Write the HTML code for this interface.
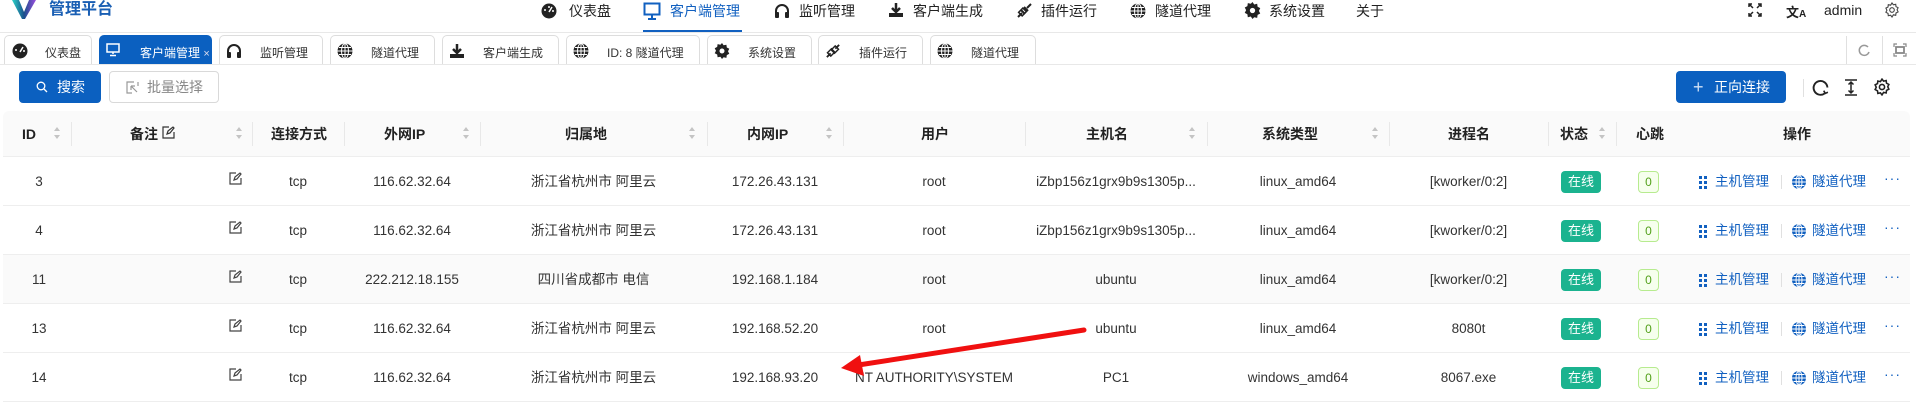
<!DOCTYPE html>
<html><head><meta charset="utf-8"><style>
*{margin:0;padding:0;box-sizing:border-box}
body{width:1916px;height:417px;overflow:hidden;background:#fff;font-family:"Liberation Sans","Noto Sans CJK SC",sans-serif;color:#222;position:relative}
.a{position:absolute;white-space:nowrap}
.nav{font-size:14px;top:2px;line-height:18px;color:#222}
.tab{position:absolute;top:35px;height:30px;border:1px solid #ddd;border-bottom:none;border-radius:5px 5px 0 0;font-size:12px;color:#333;background:#fff}
.tab svg{position:absolute;left:6px;top:7px}
.tab span{position:absolute;left:40px;top:8px}
.th{position:absolute;top:111px;height:46px;line-height:46px;font-size:14px;font-weight:bold;text-align:center;color:#222}
.sep{position:absolute;top:122px;width:1px;height:24px;background:#e8e8e8}
.sort{position:absolute;top:126px;width:8px;height:14px}
.row{position:absolute;left:3px;width:1907px;height:49px;border-bottom:1px solid #eee}
.c{position:absolute;font-size:13.5px;line-height:16px;text-align:center;color:#333}
.badge{position:absolute;width:40px;height:22px;background:#1bb38f;color:#fff;border-radius:4px;font-size:13px;line-height:22px;text-align:center}
.hb{position:absolute;width:21px;height:22px;background:#f6ffed;border:1px solid #b7eb8f;color:#52a01a;border-radius:4px;font-size:12px;line-height:20px;text-align:center}
.lk{position:absolute;color:#1160c0;font-size:13.5px;line-height:16px}
</style></head><body>
<!-- top nav -->
<svg class="a" style="left:10px;top:0" width="28" height="20"><defs><linearGradient id="g" x1="0" y1="0" x2="1" y2="0"><stop offset="0" stop-color="#2ad4c8"/><stop offset=".5" stop-color="#1a4f8a"/><stop offset="1" stop-color="#9b4de0"/></linearGradient></defs><polygon points="2,0 9,0 14,12 19,0 26,0 15,19 12,19" fill="url(#g)"/></svg>
<div class="a" style="left:49px;top:0;font-size:16px;font-weight:bold;color:#1a5fb4;line-height:19px">管理平台</div>
<svg class="a" style="left:541px;top:3px" width="16" height="16" viewBox="0 0 16 16"><circle cx="8" cy="8" r="7.5" fill="#222"/><path d="M8 9 L11 4" stroke="#fff" stroke-width="1.5"/><circle cx="4" cy="7" r="1" fill="#fff"/><circle cx="8" cy="4" r="1" fill="#fff"/><circle cx="12" cy="8" r="1" fill="#fff"/></svg>
<div class="a nav" style="left:569px">仪表盘</div>
<svg class="a" style="left:643px;top:2px" width="18" height="18" viewBox="0 0 18 18"><rect x="1.5" y="1.5" width="15" height="11" fill="none" stroke="#1160c0" stroke-width="2"/><path d="M9 13v3M5 17h8" stroke="#1160c0" stroke-width="2"/></svg>
<div class="a nav" style="left:670px;color:#1160c0">客户端管理</div>
<div class="a" style="left:643px;top:30px;width:99px;height:2px;background:#1160c0"></div>
<svg class="a" style="left:774px;top:3px" width="16" height="16" viewBox="0 0 16 16"><path d="M2 12V8a6 6 0 0 1 12 0v4" fill="none" stroke="#222" stroke-width="2"/><rect x="1" y="9" width="4" height="6" rx="1" fill="#222"/><rect x="11" y="9" width="4" height="6" rx="1" fill="#222"/></svg>
<div class="a nav" style="left:799px">监听管理</div>
<svg class="a" style="left:888px;top:2px" width="16" height="16" viewBox="0 0 16 16"><path d="M8 1v9M4 6l4 4 4-4" stroke="#222" stroke-width="2.5" fill="none"/><rect x="1" y="11" width="14" height="4" fill="#222"/></svg>
<div class="a nav" style="left:913px">客户端生成</div>
<svg class="a" style="left:1016px;top:2px" width="17" height="17" viewBox="0 0 17 17"><path d="M2 15l4-4M15 2l-4 4M5 8l4 4M8 5l4 4" stroke="#222" stroke-width="2" fill="none"/><rect x="4" y="7" width="5" height="6" transform="rotate(45 6.5 10)" fill="none" stroke="#222" stroke-width="1.5"/></svg>
<div class="a nav" style="left:1041px">插件运行</div>
<svg class="a" style="left:1130px;top:3px" width="16" height="16" viewBox="0 0 16 16"><circle cx="8" cy="8" r="7.5" fill="#222"/><path d="M0.5 8h15M8 .5v15M2 4.5h12M2 11.5h12" stroke="#fff" stroke-width="1"/><ellipse cx="8" cy="8" rx="3.5" ry="7.5" fill="none" stroke="#fff"/></svg>
<div class="a nav" style="left:1155px">隧道代理</div>
<svg class="a" style="left:1244px;top:2px" width="17" height="17" viewBox="0 0 16 16"><path d="M8 0l1.6 2.3 2.8-.6.4 2.8 2.5 1.3-1.3 2.5 1.3 2.5-2.5 1.3-.4 2.8-2.8-.6L8 16l-1.6-2.3-2.8.6-.4-2.8L.7 10.2 2 7.7.7 5.2l2.5-1.3.4-2.8 2.8.6z" fill="#222"/><circle cx="8" cy="8" r="2.5" fill="#fff"/></svg>
<div class="a nav" style="left:1269px">系统设置</div>
<div class="a nav" style="left:1356px">关于</div>
<svg class="a" style="left:1748px;top:3px" width="14" height="14" viewBox="0 0 14 14" stroke="#222" stroke-width="1.5" fill="none"><path d="M1 4V1h3M10 1h3v3M13 10v3h-3M4 13H1v-3M1 1l4 4M13 1l-4 4M13 13l-4-4M1 13l4-4"/></svg>
<div class="a" style="left:1786px;top:2px;font-size:13px;font-weight:bold;color:#222">文<span style="font-size:10px">A</span></div>
<div class="a" style="left:1824px;top:1px;font-size:14px;line-height:18px;color:#222">admin</div>
<svg class="a" style="left:1884px;top:2px" width="16" height="16" viewBox="0 0 16 16"><path d="M8 1l1.4 1.8 2.3-.5.3 2.3 2.1 1.1-1 2.1 1 2.1-2.1 1.1-.3 2.3-2.3-.5L8 15l-1.4-1.8-2.3.5-.3-2.3-2.1-1.1 1-2.1-1-2.1 2.1-1.1.3-2.3 2.3.5z" fill="none" stroke="#444" stroke-width="1.1"/><circle cx="8" cy="8" r="2.3" fill="none" stroke="#444" stroke-width="1.1"/></svg>
<div class="a" style="left:0;top:32px;width:1916px;height:1px;background:#e8e8e8"></div>
<!-- tabs -->
<div class="tab" style="left:4px;width:88px"><svg width="18" height="16" viewBox="0 0 16 16"><circle cx="8" cy="8" r="7.5" fill="#222"/><path d="M8 9 L11 4" stroke="#fff" stroke-width="1.5"/><circle cx="4" cy="7" r="1" fill="#fff"/><circle cx="12" cy="8" r="1" fill="#fff"/></svg><span>仪表盘</span></div>
<div class="tab" style="left:99px;width:113px;background:#0b60c0;border-color:#0b60c0;color:#fff"><svg width="14" height="14" viewBox="0 0 14 14"><rect x="1" y="1" width="12" height="8" fill="none" stroke="#fff" stroke-width="1.5"/><path d="M7 9v2M4 12.5h6" stroke="#fff" stroke-width="1.5"/></svg><span>客户端管理 <span style="position:static;font-size:11px;color:#dde">×</span></span></div>
<div class="tab" style="left:219px;width:104px"><svg width="16" height="16" viewBox="0 0 16 16"><path d="M2 12V8a6 6 0 0 1 12 0v4" fill="none" stroke="#222" stroke-width="2"/><rect x="1" y="9" width="4" height="6" rx="1" fill="#222"/><rect x="11" y="9" width="4" height="6" rx="1" fill="#222"/></svg><span>监听管理</span></div>
<div class="tab" style="left:330px;width:105px"><svg width="16" height="16" viewBox="0 0 16 16"><circle cx="8" cy="8" r="7.5" fill="#222"/><path d="M.5 8h15M8 .5v15M2 4.5h12M2 11.5h12" stroke="#fff"/><ellipse cx="8" cy="8" rx="3.5" ry="7.5" fill="none" stroke="#fff"/></svg><span>隧道代理</span></div>
<div class="tab" style="left:442px;width:117px"><svg width="16" height="16" viewBox="0 0 16 16"><path d="M8 1v9M4 6l4 4 4-4" stroke="#222" stroke-width="2.5" fill="none"/><rect x="1" y="11" width="14" height="4" fill="#222"/></svg><span>客户端生成</span></div>
<div class="tab" style="left:566px;width:134px"><svg width="16" height="16" viewBox="0 0 16 16"><circle cx="8" cy="8" r="7.5" fill="#222"/><path d="M.5 8h15M8 .5v15M2 4.5h12M2 11.5h12" stroke="#fff"/><ellipse cx="8" cy="8" rx="3.5" ry="7.5" fill="none" stroke="#fff"/></svg><span>ID: 8 隧道代理</span></div>
<div class="tab" style="left:707px;width:105px"><svg width="16" height="16" viewBox="0 0 16 16"><path d="M8 0l1.6 2.3 2.8-.6.4 2.8 2.5 1.3-1.3 2.5 1.3 2.5-2.5 1.3-.4 2.8-2.8-.6L8 16l-1.6-2.3-2.8.6-.4-2.8L.7 10.2 2 7.7.7 5.2l2.5-1.3.4-2.8 2.8.6z" fill="#222"/><circle cx="8" cy="8" r="2.5" fill="#fff"/></svg><span>系统设置</span></div>
<div class="tab" style="left:818px;width:105px"><svg width="16" height="16" viewBox="0 0 17 17"><path d="M2 15l4-4M15 2l-4 4" stroke="#222" stroke-width="2"/><rect x="4" y="7" width="5" height="6" transform="rotate(45 6.5 10)" fill="none" stroke="#222" stroke-width="1.5"/><rect x="8" y="4" width="5" height="6" transform="rotate(45 10.5 7)" fill="none" stroke="#222" stroke-width="1.5"/></svg><span>插件运行</span></div>
<div class="tab" style="left:930px;width:106px"><svg width="16" height="16" viewBox="0 0 16 16"><circle cx="8" cy="8" r="7.5" fill="#222"/><path d="M.5 8h15M8 .5v15M2 4.5h12M2 11.5h12" stroke="#fff"/><ellipse cx="8" cy="8" rx="3.5" ry="7.5" fill="none" stroke="#fff"/></svg><span>隧道代理</span></div>
<div class="a" style="left:1846px;top:36px;width:1px;height:28px;background:#e0e0e0"></div>
<svg class="a" style="left:1857px;top:43px" width="14" height="14" viewBox="0 0 14 14"><path d="M11 4A5 5 0 1 0 12 9" fill="none" stroke="#999" stroke-width="1.5"/></svg>
<div class="a" style="left:1882px;top:36px;width:1px;height:28px;background:#e0e0e0"></div>
<svg class="a" style="left:1893px;top:43px" width="14" height="14" viewBox="0 0 14 14" fill="none" stroke="#888" stroke-width="1.2"><path d="M1 4V1h3M10 1h3v3M13 10v3h-3M4 13H1v-3"/><rect x="3" y="4" width="8" height="6" stroke-width="1.8"/></svg>
<div class="a" style="left:0;top:64px;width:1916px;height:1px;background:#e8e8e8"></div>
<!-- buttons -->
<div class="a" style="left:19px;top:71px;width:82px;height:32px;background:#0b60c0;border-radius:4px;color:#fff;font-size:14px;line-height:32px"><svg style="position:absolute;left:17px;top:10px" width="12" height="12" viewBox="0 0 12 12"><circle cx="5" cy="5" r="3.8" fill="none" stroke="#fff" stroke-width="1.3"/><path d="M8 8l3 3" stroke="#fff" stroke-width="1.3"/></svg><span style="position:absolute;left:38px">搜索</span></div>
<div class="a" style="left:109px;top:71px;width:110px;height:32px;border:1px solid #d9d9d9;border-radius:4px;color:#888;font-size:14px;line-height:30px"><svg style="position:absolute;left:16px;top:9px" width="13" height="13" viewBox="0 0 13 13" fill="none" stroke="#999" stroke-width="1.2"><path d="M8 1H1v11h5"/><path d="M12 1v4M5 5l6 6M5 5h4M5 5v4"/></svg><span style="position:absolute;left:37px">批量选择</span></div>
<div class="a" style="left:1676px;top:71px;width:110px;height:32px;background:#0b60c0;border-radius:4px;color:#fff;font-size:14px;line-height:32px"><span style="position:absolute;left:17px;font-size:18px;color:#cfe0f5">+</span><span style="position:absolute;left:38px">正向连接</span></div>
<div class="a" style="left:1803px;top:79px;width:1px;height:18px;background:#e0e0e0"></div>
<svg class="a" style="left:1812px;top:79px" width="17" height="17" viewBox="0 0 16 16"><path d="M12 13.5A6.5 6.5 0 1 1 14.5 8" fill="none" stroke="#222" stroke-width="1.8"/><path d="M11 11l1.5 2.5 2.5-1" fill="none" stroke="#222" stroke-width="1.5"/></svg>
<svg class="a" style="left:1844px;top:79px" width="14" height="17" viewBox="0 0 14 17" stroke="#222" stroke-width="1.5" fill="none"><path d="M1 1h12M1 16h12M7 3v11M4.5 5.5L7 3l2.5 2.5M4.5 11.5L7 14l2.5-2.5"/></svg>
<svg class="a" style="left:1873px;top:78px" width="18" height="18" viewBox="0 0 16 16"><path d="M8 1l1.4 1.8 2.3-.5.3 2.3 2.1 1.1-1 2.1 1 2.1-2.1 1.1-.3 2.3-2.3-.5L8 15l-1.4-1.8-2.3.5-.3-2.3-2.1-1.1 1-2.1-1-2.1 2.1-1.1.3-2.3 2.3.5z" fill="none" stroke="#222" stroke-width="1.4"/><circle cx="8" cy="8" r="2.3" fill="none" stroke="#222" stroke-width="1.4"/></svg>
<!-- table header -->
<div class="a" style="left:3px;top:111px;width:1907px;height:46px;background:#fafafa;border-radius:6px 6px 0 0;border-bottom:1px solid #eee"></div>
<div class="th" style="left:22px">ID</div>
<div class="th" style="left:130px">备注 <svg width="13" height="13" viewBox="0 0 13 13" fill="none" stroke="#333" stroke-width="1.2"><path d="M7 1H1v11h11V6"/><path d="M5 8l1-3 5-4 1 1-4 5z"/></svg></div>
<div class="th" style="left:271px">连接方式</div>
<div class="th" style="left:384px">外网IP</div>
<div class="th" style="left:565px">归属地</div>
<div class="th" style="left:747px">内网IP</div>
<div class="th" style="left:921px">用户</div>
<div class="th" style="left:1086px">主机名</div>
<div class="th" style="left:1262px">系统类型</div>
<div class="th" style="left:1448px">进程名</div>
<div class="th" style="left:1560px">状态</div>
<div class="th" style="left:1636px">心跳</div>
<div class="th" style="left:1783px">操作</div>
<div class="sep" style="left:71px"></div><div class="sep" style="left:252px"></div><div class="sep" style="left:344px"></div><div class="sep" style="left:480px"></div><div class="sep" style="left:707px"></div><div class="sep" style="left:843px"></div><div class="sep" style="left:1025px"></div><div class="sep" style="left:1207px"></div><div class="sep" style="left:1389px"></div><div class="sep" style="left:1548px"></div><div class="sep" style="left:1616px"></div>
<svg width="0" height="0" style="position:absolute"><defs><g id="s"><path d="M4 1L7 5H1z M4 13L1 9h6z" fill="#c4c4c4"/></g></defs></svg>
<svg class="sort" style="left:53px"><use href="#s"/></svg><svg class="sort" style="left:235px"><use href="#s"/></svg><svg class="sort" style="left:462px"><use href="#s"/></svg><svg class="sort" style="left:688px"><use href="#s"/></svg><svg class="sort" style="left:825px"><use href="#s"/></svg><svg class="sort" style="left:1188px"><use href="#s"/></svg><svg class="sort" style="left:1371px"><use href="#s"/></svg><svg class="sort" style="left:1598px"><use href="#s"/></svg>
<!-- rows -->
<div class="row" style="top:157px"></div><div class="row" style="top:206px"></div><div class="row" style="top:255px;background:#fafafa"></div><div class="row" style="top:304px"></div><div class="row" style="top:353px"></div>
<svg width="0" height="0" style="position:absolute"><defs>
<g id="e"><path d="M7 1H1v11h11V6" fill="none" stroke="#444" stroke-width="1.2"/><path d="M5 8l1-3 5-4 1 1-4 5z" fill="none" stroke="#444" stroke-width="1.2"/></g>
<g id="d" fill="#1160c0"><rect x="0" y="0" width="3" height="3"/><rect x="5" y="0" width="3" height="3"/><rect x="0" y="5" width="3" height="3"/><rect x="5" y="5" width="3" height="3"/><rect x="0" y="10" width="3" height="3"/><rect x="5" y="10" width="3" height="3"/></g>
<g id="gl"><circle cx="7" cy="7" r="7" fill="#1160c0"/><path d="M0 7h14M7 0v14M1.5 3.5h11M1.5 10.5h11" stroke="#fff"/><ellipse cx="7" cy="7" rx="3" ry="7" fill="none" stroke="#fff"/></g>
</defs></svg>
<div id="rows"></div>
<script>
var d=[["3","116.62.32.64","浙江省杭州市 阿里云","172.26.43.131","root","iZbp156z1grx9b9s1305p...","linux_amd64","[kworker/0:2]"],
["4","116.62.32.64","浙江省杭州市 阿里云","172.26.43.131","root","iZbp156z1grx9b9s1305p...","linux_amd64","[kworker/0:2]"],
["11","222.212.18.155","四川省成都市 电信","192.168.1.184","root","ubuntu","linux_amd64","[kworker/0:2]"],
["13","116.62.32.64","浙江省杭州市 阿里云","192.168.52.20","root","ubuntu","linux_amd64","8080t"],
["14","116.62.32.64","浙江省杭州市 阿里云","192.168.93.20","NT AUTHORITY\\SYSTEM","PC1","windows_amd64","8067.exe"]];
var cols=[[3,71],[344,480],[480,707],[707,843],[843,1025],[1025,1207],[1207,1389],[1389,1548]];
var h="";
d.forEach(function(r,i){var y=157+i*49;var t=y+17;
 r.forEach(function(v,j){var c=cols[j];var l=c[0],w=c[1]-c[0];if(j==0){l=3;w=72;}
  h+='<div class="c" style="left:'+l+'px;width:'+w+'px;top:'+t+'px">'+v+'</div>';});
 h+='<svg class="a" style="left:229px;top:'+(y+15)+'px" width="13" height="13"><use href="#e"/></svg>';
 h+='<div class="c" style="left:252px;width:92px;top:'+t+'px">tcp</div>';
 h+='<div class="badge" style="left:1561px;top:'+(y+14)+'px">在线</div>';
 h+='<div class="hb" style="left:1638px;top:'+(y+14)+'px">0</div>';
 h+='<svg class="a" style="left:1699px;top:'+(y+19)+'px" width="8" height="13"><use href="#d"/></svg>';
 h+='<div class="lk" style="left:1715px;top:'+t+'px">主机管理</div>';
 h+='<div class="a" style="left:1781px;top:'+(y+18)+'px;width:1px;height:14px;background:#e0e0e0"></div>';
 h+='<svg class="a" style="left:1792px;top:'+(y+18)+'px" width="14" height="14"><use href="#gl"/></svg>';
 h+='<div class="lk" style="left:1812px;top:'+t+'px">隧道代理</div>';
 h+='<div class="lk" style="left:1884px;top:'+(t-4)+'px;font-size:14px;letter-spacing:1px">···</div>';
});
document.getElementById("rows").innerHTML=h;
</script>
<!-- red arrow -->
<svg class="a" style="left:0;top:0;pointer-events:none" width="1916" height="417">
<path d="M1084 330 L852 366" stroke="#f01010" stroke-width="5" stroke-linecap="round"/>
<path d="M841 368 L860 355 L864 376 Z" fill="#f01010"/>
</svg>
</body></html>
